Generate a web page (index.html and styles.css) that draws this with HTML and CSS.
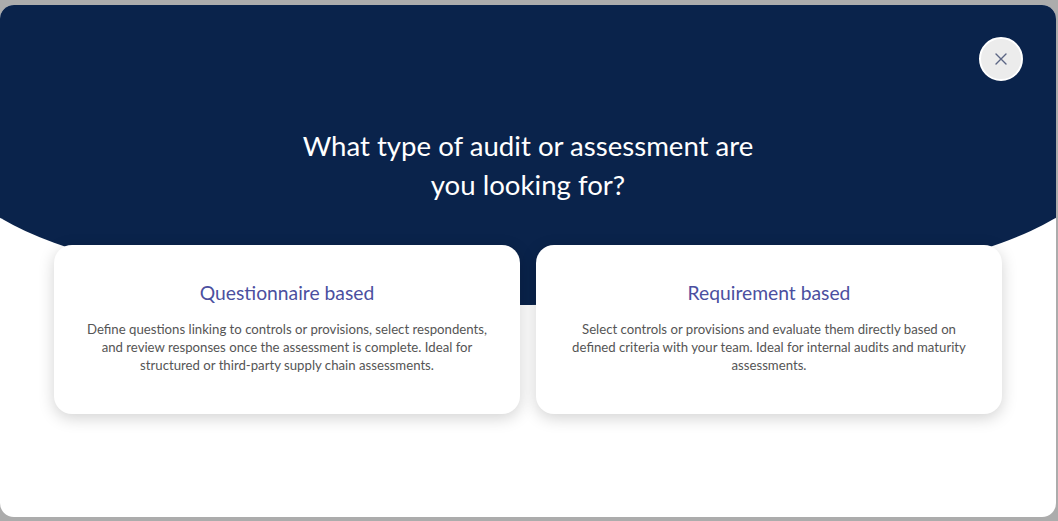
FILE: index.html
```html
<!DOCTYPE html>
<html lang="en">
<head>
<meta charset="utf-8">
<title>Audit type</title>
<link rel="stylesheet" href="styles.css">
</head>
<body>
<div class="overlay">
  <div class="modal">
    <div class="hero">
      <button class="close" aria-label="Close">
        <svg width="12" height="12" viewBox="0 0 12 12"><path d="M1 1L11 11M11 1L1 11" stroke="#5b6584" stroke-width="1.4" stroke-linecap="round" fill="none"/></svg>
      </button>
      <h1 class="title">What type of audit or assessment are you looking for?</h1>
    </div>
    <div class="cards">
      <div class="card">
        <h2 class="card-title">Questionnaire based</h2>
        <p class="card-text">Define questions linking to controls or provisions, select respondents, and review responses once the assessment is complete. Ideal for structured or third-party supply chain assessments.</p>
      </div>
      <div class="card">
        <h2 class="card-title">Requirement based</h2>
        <p class="card-text">Select controls or provisions and evaluate them directly based on defined criteria with your team. Ideal for internal audits and maturity assessments.</p>
      </div>
    </div>
  </div>
</div>
</body>
</html>
```

FILE: styles.css
```css
html, body {
  margin: 0;
  padding: 0;
  height: 100%;
}
body {
  background: #acacac;
  font-family: Lato, "Open Sans", sans-serif;
}
.overlay {
  padding: 5px 2px 4px 0;
  height: 100%;
  box-sizing: border-box;
}
.modal {
  position: relative;
  height: 100%;
  background: #ffffff;
  border-radius: 14px;
  overflow: hidden;
}
.hero {
  position: relative;
  height: 300px;
  display: flex;
  justify-content: center;
  padding-top: 121px;
  box-sizing: border-box;
}
.hero::before {
  content: "";
  position: absolute;
  top: 0;
  bottom: 0;
  left: -42px;
  right: -42px;
  background: #0a234b;
  border-radius: 0 0 50% 50% / 0 0 140px 140px;
}
.title {
  position: relative;
  margin: 0;
  max-width: 480px;
  color: #ffffff;
  font-size: 27.6px;
  font-weight: 400;
  line-height: 39px;
  text-align: center;
}
.close {
  position: absolute;
  top: 32px;
  right: 33px;
  z-index: 1;
  width: 44px;
  height: 44px;
  border-radius: 50%;
  border: 2px solid #ffffff;
  background: #ececec;
  padding: 0;
  display: flex;
  align-items: center;
  justify-content: center;
  cursor: pointer;
}
.cards {
  position: relative;
  display: flex;
  gap: 16px;
  padding: 0 54px;
  margin-top: -60px;
}
.card {
  flex: 1;
  height: 169px;
  box-sizing: border-box;
  background: #ffffff;
  border-radius: 18px;
  box-shadow: 0 4px 16px rgba(0, 0, 0, 0.18);
  padding: 36px 30px 0;
  text-align: center;
}
.card-title {
  margin: 0;
  font-size: 19.3px;
  font-weight: 400;
  line-height: 24px;
  color: #4b4f9f;
}
.card-text {
  margin: 15px 0 0;
  font-size: 13.2px;
  line-height: 18px;
  color: #555555;
}
```
